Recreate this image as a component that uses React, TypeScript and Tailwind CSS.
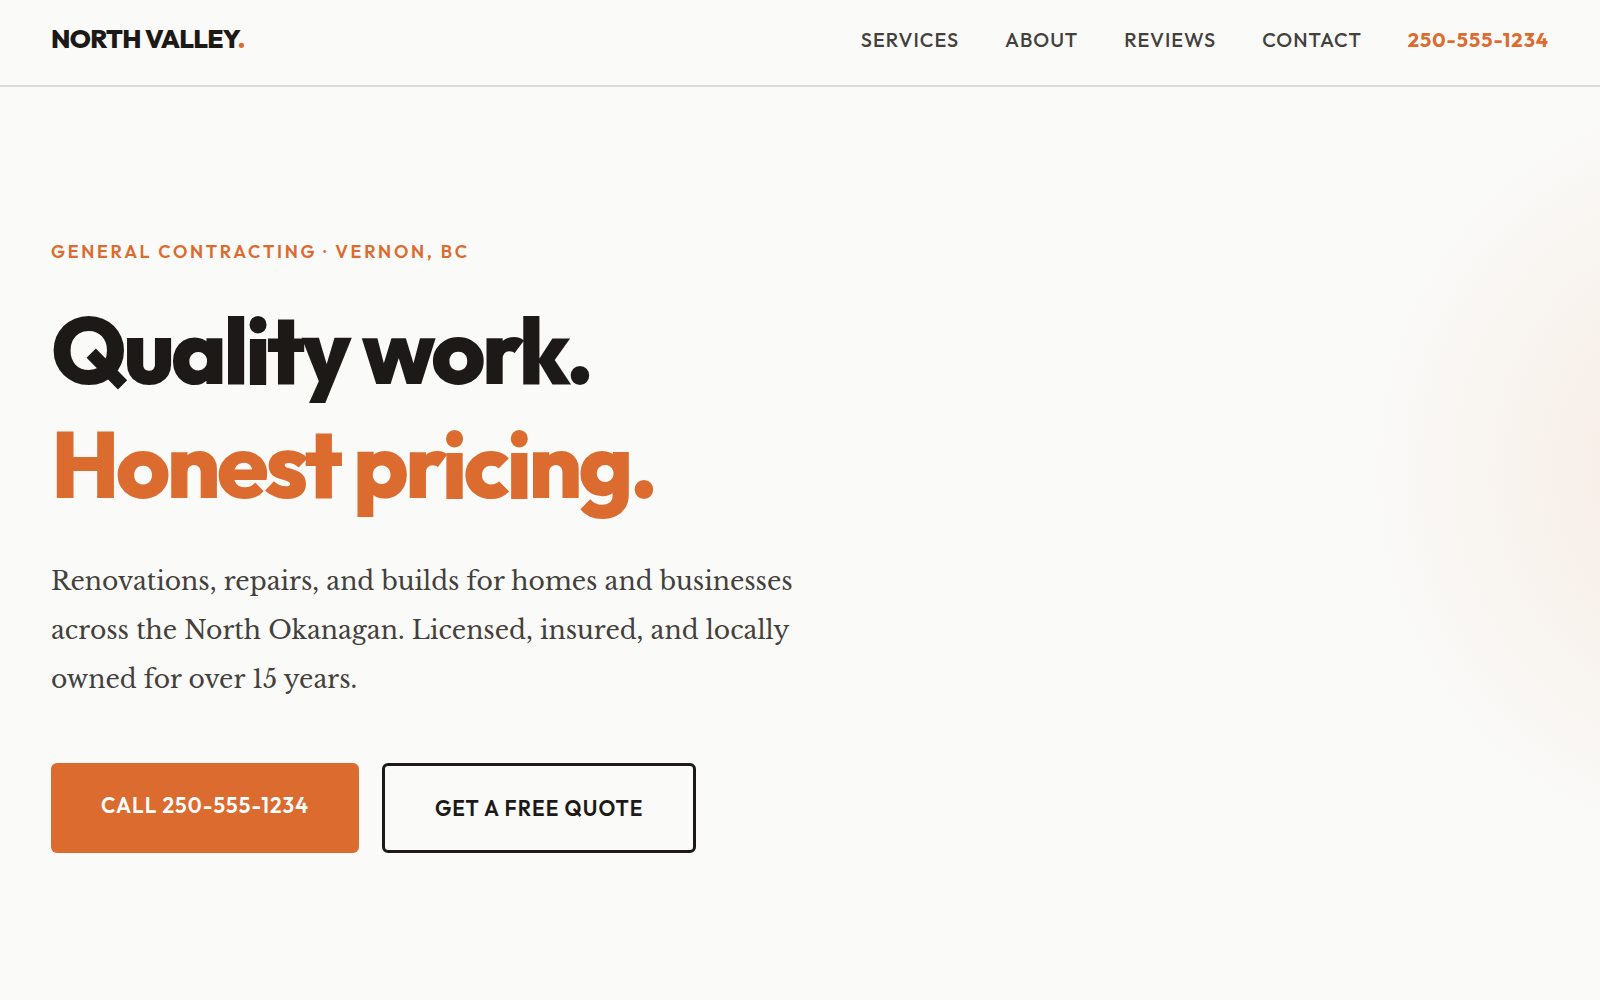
import React from 'react';

const navLinks = [
    { label: 'Services', href: '#services' },
    { label: 'About', href: '#about' },
    { label: 'Reviews', href: '#reviews' },
    { label: 'Contact', href: '#contact' },
];

const Navbar = () => {
    return (
        <header className="flex items-start justify-between border-b-2 border-[#d9d9d7] px-[51px] pt-[22px] pb-[27px] font-['Outfit','Lato',sans-serif]">
            <a href="#top" className="text-[26px] leading-[34px] font-extrabold tracking-tight text-[#1c1917] uppercase">
                North Valley<span className="text-[#dc6b2f]">.</span>
            </a>
            <nav className="flex items-center gap-[46px] text-[20px] leading-[36px] tracking-wider text-[#44403c] uppercase">
                {navLinks.map((link) => (
                    <a key={link.label} href={link.href} className="font-medium">{link.label}</a>
                ))}
                <a href="tel:2505551234" className="font-bold text-[#dc6b2f]">250-555-1234</a>
            </nav>
        </header>
    )
};

const Hero = () => {
    return (
        <section className="relative flex-1 overflow-hidden px-[51px] py-[148px]">
            {/* Warm glow behind the right edge */}
            <div className="pointer-events-none absolute top-[4px] -right-[500px] h-[760px] w-[730px] rounded-full bg-[radial-gradient(closest-side,rgba(220,107,47,0.12),transparent)]" />

            <div className="relative">
                <p className="font-['Outfit','Lato',sans-serif] text-[18px] leading-[34px] font-semibold tracking-[0.15em] text-[#dc6b2f] uppercase">
                    General Contracting · Vernon, BC
                </p>
                <h1 className="mt-[24px] font-['Outfit','Lato',sans-serif] text-[93px] leading-[114px] font-extrabold tracking-[-0.04em] text-[#1c1917]">
                    Quality work.
                    <span className="block text-[#dc6b2f]">Honest pricing.</span>
                </h1>
                <p className="mt-[36px] max-w-[760px] font-['Libre_Baskerville','Liberation_Serif',serif] text-[25px] leading-[49px] text-[#44403c]">
                    Renovations, repairs, and builds for homes and businesses across the North Okanagan. Licensed, insured, and locally owned for over 15 years.
                </p>
                <div className="mt-[59px] flex flex-wrap gap-[23px] font-['Outfit','Lato',sans-serif] text-[21px] leading-[36px] font-semibold tracking-wider uppercase">
                    <a href="tel:2505551234" className="rounded-md bg-[#dc6b2f] px-[50px] py-[24px] text-white">Call 250-555-1234</a>
                    <a href="#quote" className="rounded-md border-[3px] border-[#1c1917] px-[50px] py-[24px] text-[#1c1917]">Get a Free Quote</a>
                </div>
            </div>
        </section>
    )
};

const App = () => {
    return (
        <div className="flex min-h-screen flex-col bg-[#fafaf8]">
            <Navbar />
            <Hero />
        </div>
    )
};

export default App
